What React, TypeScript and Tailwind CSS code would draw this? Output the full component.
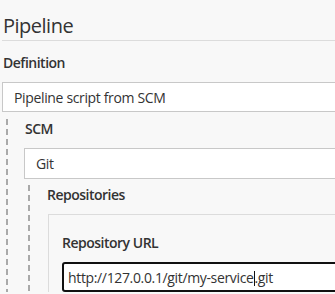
const dash =
  "bg-[repeating-linear-gradient(to_bottom,#a9a9a9_0_6px,transparent_6px_10px)]"

export default function App() {
  return (
    <div
      className="h-[294px] w-[335px] overflow-hidden bg-[#f8f8f8] text-[#333] tracking-[-0.35px]"
      style={{ fontFamily: '"Open Sans", "Noto Sans", sans-serif' }}
    >
      <div className="w-[380px]">
        <div className="ml-[2px] border-b border-[#dcdcdc] pl-px pt-[12px]">
          <h2 className="text-[20px] leading-[28px] tracking-[-0.5px]">Pipeline</h2>
        </div>

        <div className="pl-[3px] pt-[12px] text-[14px] font-semibold leading-[20px] tracking-[-0.5px]">
          Definition
        </div>

        <div className="mt-[9px] ml-[2px] flex h-[30px] items-center border border-[#c8c8c8] bg-white pl-[11px] text-[14px]">
          Pipeline script from SCM
        </div>

        <div className="flex">
          <div className={`ml-[6px] mt-[7px] w-[2px] shrink-0 ${dash}`} />
          <div className="flex-1 pl-[16px]">
            <div className="pl-px pt-[7px] text-[14px] font-semibold leading-[20px] tracking-[-0.5px]">
              SCM
            </div>

            <div className="mt-[9px] flex h-[31px] items-center border border-[#c8c8c8] bg-white pl-[11px] text-[14px]">
              Git
            </div>

            <div className="flex">
              <div className={`ml-[4px] mt-[6px] w-[2px] shrink-0 ${dash}`} />
              <div className="flex-1 pl-[16px]">
                <div className="pl-px pt-[6px] text-[14px] font-semibold leading-[20px] tracking-[-0.5px]">
                  Repositories
                </div>
                <div className="mt-[9px] ml-[2px] border-t border-l border-[#dcdcdc] pl-[13px] pt-[18px]">
                  <div className="text-[14px] font-semibold leading-[20px] tracking-[-0.5px]">
                    Repository URL
                  </div>
                  <div className="mt-[9px] flex h-[30px] w-[290px] items-center rounded-[3px] border-2 border-[#111] bg-white pl-[4px] text-[14px]">
                    <span>
                      http://127.0.0.1/git/my-service
                      <span className="inline-block h-[15px] w-px bg-[#111] align-[-3px]" />
                      .git
                    </span>
                  </div>
                </div>
              </div>
            </div>
          </div>
        </div>
      </div>
    </div>
  )
}
